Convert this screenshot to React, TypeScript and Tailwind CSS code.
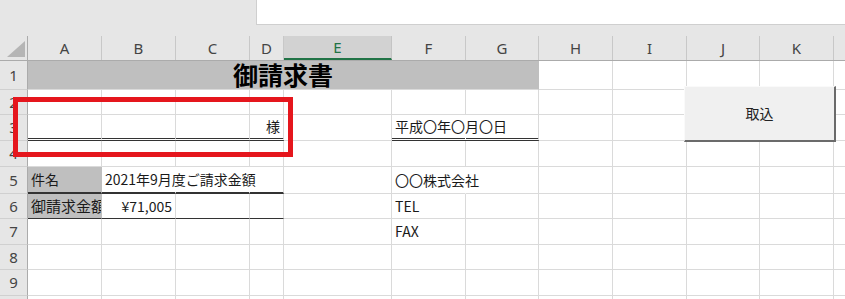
import React from 'react';
import clsx from 'clsx';

const COLS = [
  { k: 'A', w: 'w-[74px]' },
  { k: 'B', w: 'w-[74px]' },
  { k: 'C', w: 'w-[74px]' },
  { k: 'D', w: 'w-[34px]' },
  { k: 'E', w: 'w-[108px]' },
  { k: 'F', w: 'w-[74px]' },
  { k: 'G', w: 'w-[73px]' },
  { k: 'H', w: 'w-[74px]' },
  { k: 'I', w: 'w-[74px]' },
  { k: 'J', w: 'w-[73px]' },
  { k: 'K', w: 'w-[74px]' },
  { k: 'L', w: 'w-[74px]' },
];

interface CellSpec {
  className?: string;
  content?: React.ReactNode;
}

function Cell({ w, className = '', children }: { w: string; className?: string; children?: React.ReactNode }) {
  return (
    <div
      className={clsx(
        'shrink-0 h-full border-r border-b border-[#dadada] flex items-center px-[3px] whitespace-nowrap text-[14px] text-[#1a1a1a]',
        w,
        className
      )}
    >
      {children}
    </div>
  );
}

function RowHead({ n }: { n: number | string }) {
  return (
    <div className="w-[28px] shrink-0 h-full bg-[#e6e6e6] border-r border-r-[#ababab] border-b border-b-[#d0d0d0] flex items-center justify-center text-[15px] text-[#444] font-['Noto_Sans',sans-serif]">
      {n}
    </div>
  );
}

// one sheet row; `from` lets a merged cell take the first columns
function Row({ n, h, cells = {}, from = 0, lead }: { n: number | string; h: string; cells?: Record<string, CellSpec>; from?: number; lead?: React.ReactNode }) {
  return (
    <div className={clsx('flex', h)}>
      <RowHead n={n} />
      {lead}
      {COLS.slice(from).map((c) => {
        const spec = cells[c.k] || {};
        return (
          <Cell key={c.k} w={c.w} className={spec.className}>
            {spec.content}
          </Cell>
        );
      })}
    </div>
  );
}

const dbl = 'border-b-[3px] border-double border-b-[#333]';

export default function App() {
  return (
    <div className="relative w-[845px] h-[299px] overflow-hidden bg-white font-['Noto_Sans_CJK_JP',sans-serif]">
      {/* formula bar strip */}
      <div className="flex h-[25px] bg-[#e6e6e6]">
        <div className="w-[256px] shrink-0" />
        <div className="flex-1 bg-white border-l border-b border-[#cfcfcf]" />
      </div>
      <div className="h-[11px] bg-[#e6e6e6]" />

      {/* column headers */}
      <div className="flex h-[25px] bg-[#e6e6e6] border-b border-[#ababab] font-['Noto_Sans',sans-serif] text-[15px] text-[#444]">
        <div className="w-[28px] shrink-0 h-full border-r border-[#ababab] relative">
          <svg className="absolute left-0 top-0" width="28" height="24" viewBox="0 0 28 24">
            <polygon points="7,21 25,21 25,5" fill="#b5b5b5" />
          </svg>
        </div>
        {COLS.map((c) =>
          c.k === 'E' ? (
            <div key={c.k} className={clsx('shrink-0 h-full bg-[#d2d2d2] border-r border-[#c4c4c4] border-b-2 border-b-[#217346] flex items-center justify-center text-[#217346]', c.w)}>
              {c.k}
            </div>
          ) : (
            <div key={c.k} className={clsx('shrink-0 h-full border-r border-[#c8c8c8] flex items-center justify-center', c.w)}>
              {c.k}
            </div>
          )
        )}
      </div>

      <Row
        n={1}
        h="h-[29px]"
        from={7}
        lead={
          <Cell w="w-[511px]" className="bg-[#bfbfbf] justify-center font-bold text-[25px] text-black border-r-[#bfbfbf]">
            御請求書
          </Cell>
        }
      />
      <Row n={2} h="h-[25px]" />
      <Row
        n={3}
        h="h-[26px]"
        cells={{
          A: { className: dbl },
          B: { className: dbl },
          C: { className: dbl },
          D: { className: clsx(dbl, 'justify-end'), content: '様' },
          F: { className: clsx(dbl, 'border-r-transparent'), content: '平成〇年〇月〇日' },
          G: { className: dbl },
        }}
      />
      <Row n={4} h="h-[26px]" />
      <Row
        n={5}
        h="h-[27px]"
        cells={{
          A: { className: 'bg-[#bfbfbf] border-r-[#bfbfbf] border-b-2 border-b-[#333]', content: '件名' },
          B: { className: 'border-b-2 border-b-[#333] border-r-transparent', content: '2021年9月度ご請求金額' },
          C: { className: 'border-b-2 border-b-[#333] border-r-transparent' },
          D: { className: 'border-b-2 border-b-[#333]' },
          F: { className: 'border-r-transparent', content: '〇〇株式会社' },
        }}
      />
      <Row
        n={6}
        h="h-[25px]"
        cells={{
          A: { className: 'bg-[#bfbfbf] border-r-[#bfbfbf] border-b-[#333] overflow-hidden text-[15px]', content: '御請求金額' },
          B: { className: 'border-b-[#333] justify-end', content: '¥71,005' },
          C: { className: 'border-b-[#333]' },
          D: { className: 'border-b-[#333]' },
          F: { content: 'TEL' },
        }}
      />
      <Row n={7} h="h-[26px]" cells={{ F: { content: 'FAX' } }} />
      <Row n={8} h="h-[25px]" />
      <Row n={9} h="h-[26px]" />
      <Row n="" h="h-[26px]" />

      {/* red highlight box */}
      <div className="absolute left-[13px] top-[97px] w-[280px] h-[60px] border-[5px] border-[#e5161d]" />

      {/* import button */}
      <div className="absolute left-[684px] top-[86px] w-[152px] h-[56px] bg-[#f0f0f0] border-t border-l border-[#fafafa] border-r-2 border-b-2 border-r-[#6b6b6b] border-b-[#6b6b6b] flex items-center justify-center text-[14px] text-[#222]">
        取込
      </div>
    </div>
  );
}
